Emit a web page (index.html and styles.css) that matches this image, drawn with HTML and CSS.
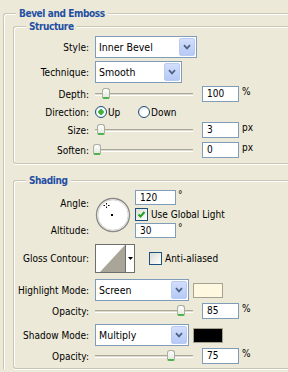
FILE: index.html
```html
<!DOCTYPE html>
<html lang="en">
  <head>
    <meta charset="UTF-8" />
    <meta name="viewport" content="width=device-width, initial-scale=1.0" />
    <title>Bevel and Emboss</title>

    <link rel="stylesheet" href="styles.css">
  </head>
  <body>
    <fieldset class="panel">
      <legend>Bevel and Emboss</legend>

      <!-- Structure -->
      <fieldset class="group group-structure">
        <legend>Structure</legend>

        <div class="row row-style">
          <span class="label">Style:</span>
          <div class="select select-style">
            <span class="select-value">Inner Bevel</span>
            <span class="select-button">
              <svg width="8" height="6" viewBox="0 0 8 6"><path d="M1 1.2 L4 4.4 L7 1.2" fill="none" stroke="#4d6185" stroke-width="1.7"/></svg>
            </span>
          </div>
        </div>

        <div class="row row-technique">
          <span class="label">Technique:</span>
          <div class="select select-technique">
            <span class="select-value">Smooth</span>
            <span class="select-button">
              <svg width="8" height="6" viewBox="0 0 8 6"><path d="M1 1.2 L4 4.4 L7 1.2" fill="none" stroke="#4d6185" stroke-width="1.7"/></svg>
            </span>
          </div>
        </div>

        <div class="row row-slider row-depth">
          <span class="label">Depth:</span>
          <div class="slider"><span class="thumb" style="left: 7px"></span></div>
          <span class="field">100</span>
          <span class="unit">%</span>
        </div>

        <div class="row row-direction">
          <span class="label">Direction:</span>
          <span class="option option-up"><span class="radio radio-on"></span>Up</span>
          <span class="option"><span class="radio"></span>Down</span>
        </div>

        <div class="row row-slider row-size">
          <span class="label">Size:</span>
          <div class="slider"><span class="thumb" style="left: 2px"></span></div>
          <span class="field">3</span>
          <span class="unit">px</span>
        </div>

        <div class="row row-slider row-soften">
          <span class="label">Soften:</span>
          <div class="slider"><span class="thumb" style="left: -2px"></span></div>
          <span class="field">0</span>
          <span class="unit">px</span>
        </div>
      </fieldset>

      <!-- Shading -->
      <fieldset class="group group-shading">
        <legend>Shading</legend>

        <div class="angle">
          <span class="label angle-label">Angle:</span>
          <svg class="dial" width="36" height="36" viewBox="0 0 36 36">
            <circle cx="18" cy="18" r="16.5" fill="#fff" stroke="#8a8a86" stroke-width="1.4"/>
            <circle cx="18" cy="18" r="15.2" fill="none" stroke="#d8d8d2" stroke-width="1"/>
            <path d="M11.5 6 V7.5 M11.5 9.5 V11 M8.5 8.5 H10 M13 8.5 H14.5" stroke="#000" stroke-width="1"/>
            <rect x="16" y="17" width="2" height="2" fill="#000"/>
          </svg>
          <span class="angle-value"><span class="field field-angle">120</span><span class="degree">°</span></span>
          <span class="check-line"><span class="checkbox checkbox-on"><svg width="11" height="11" viewBox="0 0 11 11"><path d="M2.5 5.5 L4.5 7.5 L8.5 3" fill="none" stroke="#21a121" stroke-width="2"/></svg></span>Use Global Light</span>
          <span class="label altitude-label">Altitude:</span>
          <span class="angle-value"><span class="field field-angle">30</span><span class="degree">°</span></span>
        </div>

        <div class="row row-contour">
          <span class="label">Gloss Contour:</span>
          <span class="contour">
            <svg width="29" height="27" viewBox="0 0 29 27"><polygon points="4,27 29,0 29,27" fill="#a9a699"/></svg>
          </span>
          <span class="contour-button">
            <svg width="5" height="3" viewBox="0 0 5 3"><polygon points="0,0 5,0 2.5,3" fill="#000"/></svg>
          </span>
          <span class="check-line check-anti"><span class="checkbox"></span>Anti-aliased</span>
        </div>

        <div class="row row-highlight">
          <span class="label">Highlight Mode:</span>
          <div class="select select-mode">
            <span class="select-value">Screen</span>
            <span class="select-button">
              <svg width="8" height="6" viewBox="0 0 8 6"><path d="M1 1.2 L4 4.4 L7 1.2" fill="none" stroke="#4d6185" stroke-width="1.7"/></svg>
            </span>
          </div>
          <span class="swatch swatch-highlight"></span>
        </div>

        <div class="row row-slider row-opacity">
          <span class="label">Opacity:</span>
          <div class="slider"><span class="thumb" style="left: 82px"></span></div>
          <span class="field">85</span>
          <span class="unit">%</span>
        </div>

        <div class="row row-shadow">
          <span class="label">Shadow Mode:</span>
          <div class="select select-mode">
            <span class="select-value">Multiply</span>
            <span class="select-button">
              <svg width="8" height="6" viewBox="0 0 8 6"><path d="M1 1.2 L4 4.4 L7 1.2" fill="none" stroke="#4d6185" stroke-width="1.7"/></svg>
            </span>
          </div>
          <span class="swatch swatch-shadow"></span>
        </div>

        <div class="row row-slider row-opacity">
          <span class="label">Opacity:</span>
          <div class="slider"><span class="thumb" style="left: 72px"></span></div>
          <span class="field">75</span>
          <span class="unit">%</span>
        </div>
      </fieldset>
    </fieldset>
  </body>
</html>
```

FILE: styles.css
```css
body {
  margin: 0;
  width: 288px;
  height: 372px;
  overflow: hidden;
  background: #ece9d8;
  font-family: "DejaVu Sans Condensed", "Liberation Sans", sans-serif;
  font-size: 10px;
  color: #000;
}

/* Group boxes, open on the right: the dialog goes on past this crop */
fieldset {
  margin: 0;
  min-width: 0;
  border: 1px solid #c9c6b6;
  border-right: 0;
  border-radius: 3px 0 0 3px;
  box-shadow: inset 1px 1px 0 #fff, 0 1px 0 #fff;
}

legend {
  padding: 0 3px;
  line-height: 13px;
  background: #ece9d8;
  font-family: "DejaVu Sans Condensed", "Liberation Sans", sans-serif;
  font-size: 10px;
  font-weight: bold;
  letter-spacing: -0.4px;
  color: #1f4fa3;
}

.panel {
  margin: 7px 0 0 3px;
  padding: 0 0 0 9px;
  border-bottom: 0;
  border-radius: 3px 0 0 0;
  box-shadow: inset 1px 1px 0 #fff;
}

.panel > legend {
  margin-left: 3px;
}

.group > legend {
  margin-left: 12px;
}

.group-structure {
  padding: 3px 0 5px 0;
}

.group-shading {
  margin-top: 10px;
  padding: 3px 0 4px 0;
}

/* Rows */
.row {
  display: flex;
  align-items: center;
  height: 16px;
}

.label {
  flex: none;
  width: 75px;
  margin-right: 6px;
  text-align: right;
  white-space: nowrap;
}

.row-style,
.row-technique,
.row-highlight,
.row-shadow {
  height: 22px;
}

.row-technique { margin-top: 3px; }
.row-depth { margin-top: 3px; }
.row-direction { margin-top: 2px; }
.row-size { margin-top: 2px; }
.row-soften { margin-top: 4px; }
.row-contour { margin-top: 6px; height: 29px; }
.row-highlight { margin-top: 6px; }
.row-opacity { margin-top: 2px; }
.row-shadow { margin-top: 5px; }

/* Drop-down lists */
.select {
  box-sizing: border-box;
  display: flex;
  align-items: stretch;
  height: 22px;
  padding: 1px;
  background: #fff;
  border: 1px solid #7f9db9;
}

.select-style { width: 102px; }
.select-technique { width: 87px; }
.select-mode { width: 94px; }

.select-value {
  flex: 1;
  display: flex;
  align-items: center;
  padding-left: 2px;
  font-size: 10.5px;
}

.select-button {
  display: flex;
  align-items: center;
  justify-content: center;
  width: 14px;
  border: 1px solid #b9cbf3;
  border-radius: 2px;
  background: linear-gradient(#d2defb, #b6c9f6);
}

/* Sliders */
.slider {
  position: relative;
  width: 98px;
  height: 1px;
  border-top: 1px solid #aca899;
  border-bottom: 1px solid #fff;
  background: #dedbcc;
}

.thumb {
  position: absolute;
  top: -6px;
  box-sizing: border-box;
  width: 8px;
  height: 11px;
  border: 1px solid #a9aea0;
  border-bottom: 2px solid #4fb24f;
  border-radius: 3px 3px 2px 2px;
  background: linear-gradient(#ffffff, #e6eadf);
}

.field {
  box-sizing: border-box;
  width: 37px;
  height: 16px;
  margin-left: 9px;
  padding-left: 4px;
  line-height: 14px;
  background: #fff;
  border: 1px solid #7f9db9;
}

.unit {
  margin-left: 3px;
  align-self: flex-start;
  line-height: 12px;
}

/* Radio buttons and checkboxes */
.option {
  display: flex;
  align-items: center;
}

.option-up {
  width: 43px;
}

.radio {
  box-sizing: border-box;
  width: 12px;
  height: 12px;
  margin-right: 1px;
  border: 1px solid #1c5180;
  border-radius: 50%;
  background: radial-gradient(circle at 60% 60%, #ffffff 30%, #dcdcd4);
}

.radio-on {
  background: radial-gradient(circle, #3fb13f 0 2.5px, #ffffff 3px 45%, #dcdcd4);
}

.checkbox {
  box-sizing: border-box;
  display: flex;
  align-items: center;
  justify-content: center;
  width: 13px;
  height: 13px;
  margin-right: 3px;
  border: 1px solid #1c5180;
  background: linear-gradient(135deg, #dcdcd4, #ffffff);
}

.check-line {
  display: flex;
  align-items: center;
  white-space: nowrap;
}

/* Angle and altitude */
.angle {
  display: grid;
  grid-template-columns: 81px 40px auto;
  grid-template-rows: 15px 18px 15px;
}

.angle-label {
  grid-row: 1 / 3;
  align-self: start;
  margin-top: 8px;
}

.altitude-label {
  grid-row: 3;
  grid-column: 1;
  align-self: center;
}

.dial {
  grid-row: 1 / 4;
  grid-column: 2;
  margin-top: 7px;
}

.angle-value {
  display: flex;
  grid-column: 3;
}

.field-angle {
  width: 41px;
  height: 15px;
  margin-left: 0;
}

.degree {
  margin-left: 2px;
  line-height: 10px;
}

/* Contour */
.contour {
  display: flex;
  box-sizing: border-box;
  width: 31px;
  height: 29px;
  border: 1px solid #6e6e6a;
  background: #fff;
}

.contour-button {
  display: flex;
  align-items: center;
  justify-content: center;
  box-sizing: border-box;
  width: 9px;
  height: 29px;
  border: 1px solid #6e6e6a;
  border-left: 0;
  background: #fff;
}

.check-anti {
  margin-left: 14px;
}

/* Colour swatches */
.swatch {
  box-sizing: border-box;
  width: 30px;
  height: 15px;
  margin-left: 4px;
  border: 1px solid #a5a290;
}

.swatch-highlight { background: #fdf8df; }
.swatch-shadow { background: #000; }
```
